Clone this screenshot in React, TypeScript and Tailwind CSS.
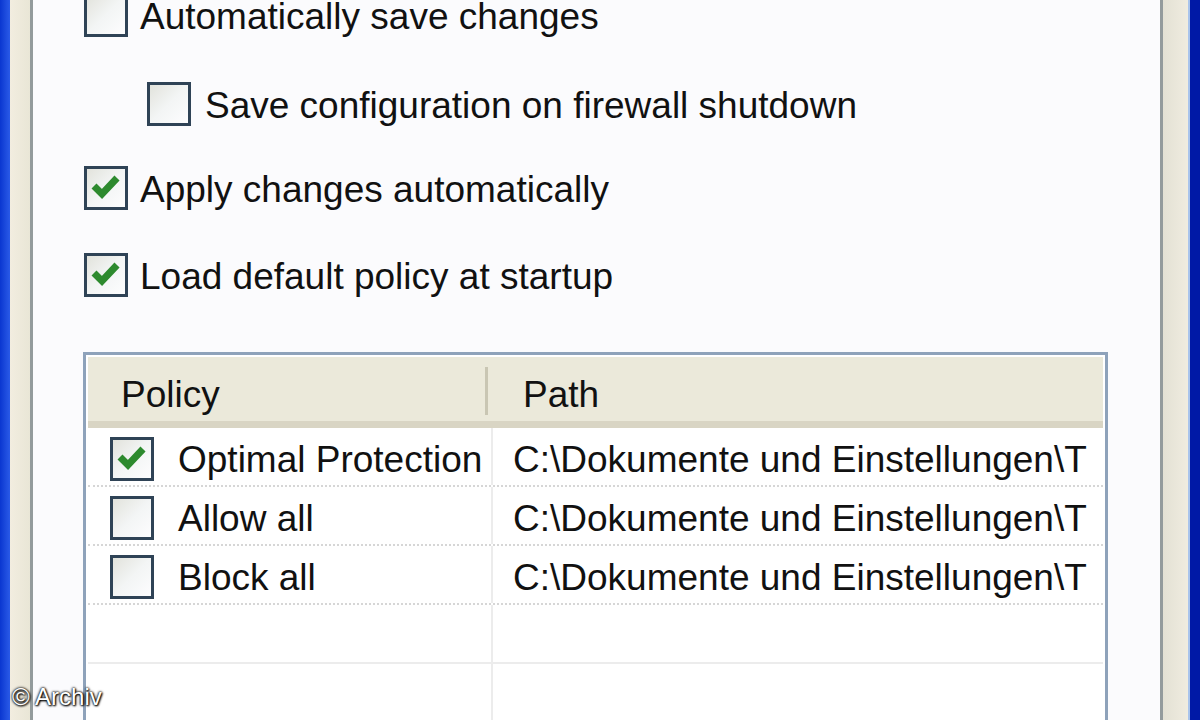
import React from 'react';

const font = { fontFamily: '"Liberation Sans", Arial, sans-serif' };

function Box({ checked }: { checked?: boolean }) {
  return (
    <div className="relative w-[44px] h-[44px] shrink-0 border-[3px] border-[#2f4356] bg-gradient-to-br from-[#e2e3dc] via-[#f3f5f5] to-[#fdfdfe]">
      {checked && (
        <svg viewBox="0 0 38 38" className="absolute inset-0 w-full h-full">
          <path d="M7 17 L15 25 L30 9" fill="none" stroke="#2d8a2e" strokeWidth="7" strokeLinejoin="miter" />
        </svg>
      )}
    </div>
  );
}

function Option({ label, checked }: { label: string; checked?: boolean }) {
  return (
    <div className="flex items-center gap-[12px]">
      <Box checked={checked} />
      <span className="text-[37px] leading-none text-[#111] pt-[3px]">{label}</span>
    </div>
  );
}

const policies = [
  { name: 'Optimal Protection', checked: true },
  { name: 'Allow all', checked: false },
  { name: 'Block all', checked: false },
];

export default function App() {
  return (
    <div className="w-[1200px] h-[720px] flex overflow-hidden relative" style={font}>
      <div className="w-[10px] bg-gradient-to-r from-[#0a36d0] to-[#2a5ae8]" />
      <div className="w-[20px] bg-gradient-to-r from-[#f2ede0] to-[#e9e6d6]" />
      <div className="w-[3px] bg-[#939b9c]" />

      <div className="flex-1 bg-[#fbfbfd] pl-[51px] overflow-hidden">
        <div className="mt-[-7px]">
          <Option label="Automatically save changes" />
        </div>
        <div className="mt-[45px] pl-[63px] flex items-center gap-[14px]">
          <Box />
          <span className="text-[37px] leading-none text-[#111] pt-[3px]">Save configuration on firewall shutdown</span>
        </div>
        <div className="mt-[40px]">
          <Option label="Apply changes automatically" checked />
        </div>
        <div className="mt-[43px]">
          <Option label="Load default policy at startup" checked />
        </div>

        <div className="mt-[55px] ml-[-1px] w-[1025px] h-[400px] border-[3px] border-[#8ea2ba] p-[2px] bg-white">
          <div className="h-[71px] flex bg-[#ebe9da] border-b-[7px] border-[#d9d5c4]">
            <div className="w-[397px] pl-[33px] pt-[12px] flex items-center text-[37px] text-[#111]">Policy</div>
            <div className="w-[3px] mt-[10px] mb-[6px] bg-[#c9c6b3]" />
            <div className="flex-1 pl-[35px] pt-[12px] flex items-center text-[37px] text-[#111]">Path</div>
          </div>
          {policies.map((p) => (
            <div key={p.name} className="h-[59px] flex border-b-2 border-dotted border-[#d6d6d6]">
              <div className="w-[403px] pl-[22px] pt-[4px] flex items-center gap-[24px]">
                <Box checked={p.checked} />
                <span className="text-[37px] leading-none text-[#111] whitespace-nowrap pt-[2px]">{p.name}</span>
              </div>
              <div className="w-[2px] bg-[#ececec]" />
              <div className="flex-1 pl-[20px] pt-[6px] flex items-center overflow-hidden">
                <span className="text-[37px] leading-none text-[#111] whitespace-nowrap">C:\Dokumente und Einstellungen\T</span>
              </div>
            </div>
          ))}
          <div className="h-[59px] flex border-b-2 border-[#ececec]">
            <div className="w-[403px]" />
            <div className="w-[2px] bg-[#ececec]" />
          </div>
          <div className="h-[80px] flex">
            <div className="w-[403px]" />
            <div className="w-[2px] bg-[#ececec]" />
          </div>
        </div>
      </div>

      <div className="w-[3px] bg-[#939b9c]" />
      <div className="w-[25px] bg-gradient-to-r from-[#e3e1d4] to-[#f0ece0]" />
      <div className="w-[2px] bg-[#a9c4ec]" />
      <div className="w-[10px] bg-[#0019a6]" />

      <div
        className="absolute left-[12px] top-[685px] text-[24px] leading-none text-white"
        style={{ textShadow: '0 0 3px #000, 0 0 2px #000, 1px 1px 2px #000' }}
      >
        © Archiv
      </div>
    </div>
  );
}
